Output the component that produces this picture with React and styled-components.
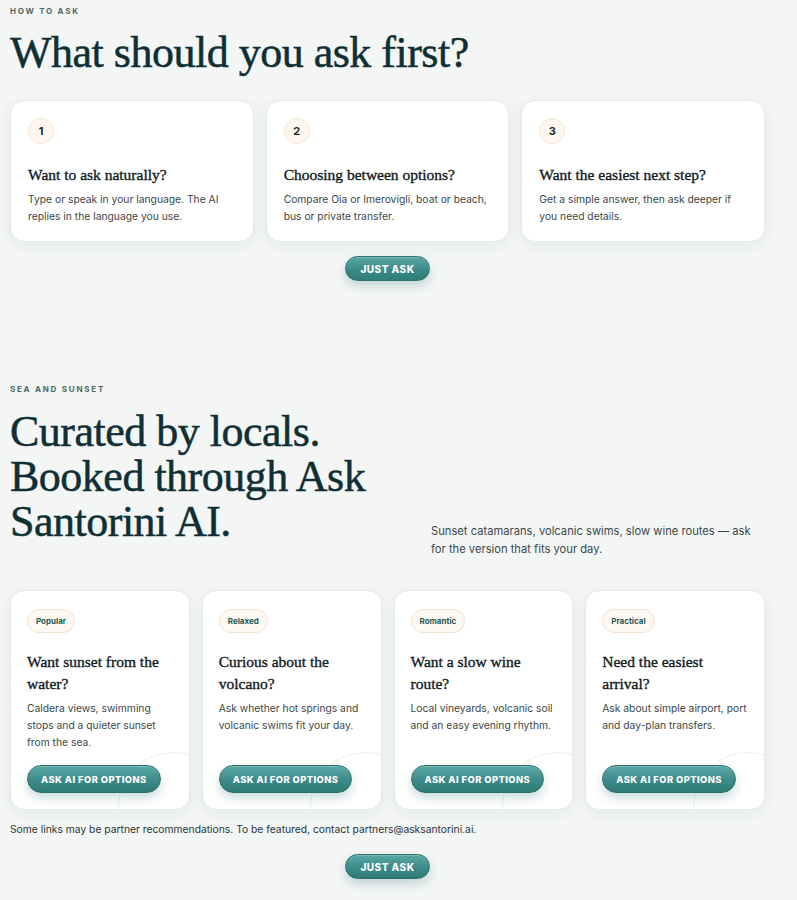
import React from "react";
import styled, { createGlobalStyle } from "styled-components";

const Global = createGlobalStyle`
  * { box-sizing: border-box; }
  body { margin: 0; background: #f3f6f5; font-family: Inter, "Liberation Sans", sans-serif; color: #1d2b2c; }
`;

const Page = styled.div`
  padding: 5px 32px 20px 10px;
  width: 797px;
`;

const Section = styled.section`
  display: flex;
  flex-direction: column;
  margin-bottom: ${(p) => p.$mb || 0}px;
`;

const Eyebrow = styled.div`
  font-size: 8px;
  font-weight: 700;
  letter-spacing: 0.22em;
  text-transform: uppercase;
  color: #4d6863;
  margin: 1px 0 0;
`;

const Heading = styled.h2`
  font-family: "Liberation Serif", "DejaVu Serif", serif;
  font-weight: 400;
  font-size: 44px;
  line-height: 45px;
  letter-spacing: -0.5px;
  color: #0f2f35;
  -webkit-text-stroke: 0.5px #0f2f35;
  margin: ${(p) => p.$m || "0"};
  padding-bottom: ${(p) => p.$pb || 0}px;
`;

const Grid = styled.div`
  display: grid;
  grid-template-columns: repeat(${(p) => p.$cols}, 1fr);
  gap: 12px;
`;

const Card = styled.div`
  position: relative;
  overflow: hidden;
  background: #ffffff;
  border: 1px solid #e3eae8;
  border-radius: 14px;
  box-shadow: 0 4px 14px rgba(30, 60, 60, 0.07);
  padding: ${(p) => p.$pad};
  min-height: ${(p) => p.$h}px;
  display: flex;
  flex-direction: column;
`;

const Num = styled.div`
  width: 26px;
  height: 26px;
  border-radius: 50%;
  background: #fdf7ee;
  border: 1px solid #f6e6d2;
  display: flex;
  align-items: center;
  justify-content: center;
  font-size: 11px;
  font-weight: 700;
  color: #1b2a2a;
  margin-bottom: 20px;
`;

const CardTitle = styled.h3`
  font-family: "Liberation Serif", "DejaVu Serif", serif;
  font-weight: 400;
  font-size: ${(p) => p.$fs || 16}px;
  line-height: ${(p) => p.$lh || 22}px;
  color: #101a1c;
  margin: 0 0 ${(p) => p.$mb || 6}px;
  -webkit-text-stroke: 0.35px #101a1c;
`;

const CardText = styled.p`
  font-size: 10.3px;
  line-height: 17px;
  color: #3b4748;
  margin: 0;
`;

const Badge = styled.span`
  align-self: flex-start;
  padding: 6px 8px;
  border-radius: 999px;
  background: #fdf8f1;
  border: 1px solid #f5e2cf;
  font-size: 8px;
  font-weight: 700;
  color: #1f5a55;
  margin: 1px 0 18px;
`;

const Button = styled.button`
  position: relative;
  z-index: 1;
  align-self: ${(p) => p.$align || "center"};
  border: 1px solid #2d706d;
  border-radius: 999px;
  background: linear-gradient(180deg, #5aa8a5 0%, #3c8b88 55%, #2f7b78 100%);
  color: #ffffff;
  font-family: Inter, "Liberation Sans", sans-serif;
  font-weight: 800;
  font-size: ${(p) => p.$fs || 10}px;
  letter-spacing: 0.05em;
  text-transform: uppercase;
  height: ${(p) => p.$h || 25}px;
  padding: 0 ${(p) => p.$px || 14}px;
  box-shadow: 0 5px 10px rgba(47, 123, 120, 0.25), inset 0 1px 0 rgba(255, 255, 255, 0.2);
  cursor: pointer;
  margin-top: ${(p) => p.$mt || 0}px;
`;

const Arc = styled.div`
  position: absolute;
  width: 110px;
  height: 110px;
  border-radius: 50%;
  border: 1px solid #e9eeed;
  left: 107px;
  top: 161px;
  pointer-events: none;
`;

const Split = styled.div`
  display: grid;
  grid-template-columns: 421px 1fr;
  align-items: end;
  margin: 15px 0 31px;
`;

const Lead = styled.p`
  font-size: 11.2px;
  line-height: 18px;
  color: #3b4748;
  margin: 0 0 1px;
  max-width: 330px;
`;

const Note = styled.p`
  font-size: 10.3px;
  color: #2a3536;
  margin: 13px 0 19px;
`;

const steps = [
  ["1", "Want to ask naturally?", "Type or speak in your language. The AI replies in the language you use."],
  ["2", "Choosing between options?", "Compare Oia or Imerovigli, boat or beach, bus or private transfer."],
  ["3", "Want the easiest next step?", "Get a simple answer, then ask deeper if you need details."],
];

const tours = [
  ["Popular", "Want sunset from the water?", "Caldera views, swimming stops and a quieter sunset from the sea."],
  ["Relaxed", "Curious about the volcano?", "Ask whether hot springs and volcanic swims fit your day."],
  ["Romantic", "Want a slow wine route?", "Local vineyards, volcanic soil and an easy evening rhythm."],
  ["Practical", "Need the easiest arrival?", "Ask about simple airport, port and day-plan transfers."],
];

export default function App() {
  return (
    <>
      <Global />
      <Page>
        <Section $mb={102}>
          <Eyebrow>How to ask</Eyebrow>
          <Heading $m="14px 0 25px">What should you ask first?</Heading>
          <Grid $cols={3}>
            {steps.map(([n, t, d]) => (
              <Card key={n} $pad="17px 17px 16px" $h={140}>
                <Num>{n}</Num>
                <CardTitle $fs={15.5} $lh={22} $mb={5}>{t}</CardTitle>
                <CardText>{d}</CardText>
              </Card>
            ))}
          </Grid>
          <Button $mt={14}>Just ask</Button>
        </Section>

        <Section>
          <Eyebrow>Sea and sunset</Eyebrow>
          <Split>
            <Heading $pb={15}>
              Curated by locals.
              <br />
              Booked through Ask
              <br />
              Santorini AI.
            </Heading>
            <Lead>Sunset catamarans, volcanic swims, slow wine routes — ask for the version that fits your day.</Lead>
          </Split>
          <Grid $cols={4}>
            {tours.map(([b, t, d]) => (
              <Card key={b} $pad="17px 16px 16px" $h={220}>
                <Arc />
                <Badge>{b}</Badge>
                <CardTitle $fs={15.5} $lh={22} $mb={5}>{t}</CardTitle>
                <CardText>{d}</CardText>
                <Button $align="flex-start" $h={28} $px={13} $fs={9.3} style={{ marginTop: "auto" }}>
                  Ask AI for options
                </Button>
              </Card>
            ))}
          </Grid>
          <Note>Some links may be partner recommendations. To be featured, contact partners@asksantorini.ai.</Note>
          <Button>Just ask</Button>
        </Section>
      </Page>
    </>
  );
}
